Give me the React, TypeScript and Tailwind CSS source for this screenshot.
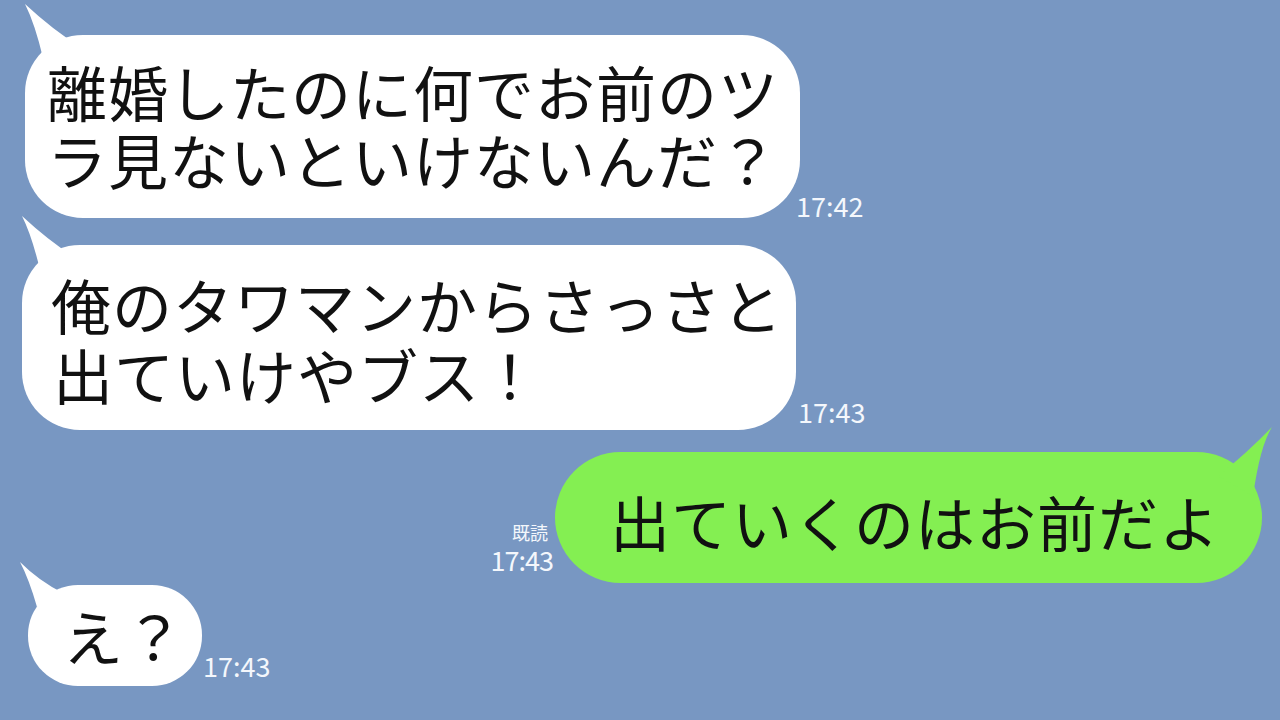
import React from "react";

const font = { fontFamily: '"Noto Sans CJK JP", "Noto Sans", sans-serif' };

function TailLeft({ top, left }: { top: string; left: string }) {
  return (
    <svg
      className={`absolute ${top} ${left} w-[70px] h-[80px]`}
      viewBox="0 0 70 80"
      fill="#ffffff"
    >
      <path d="M2,2 Q12,22 20,56 L56,44 Q30,28 2,2 Z" />
    </svg>
  );
}

export default function App() {
  return (
    <div
      className="w-full h-[720px] bg-[#7897c2] overflow-hidden flex flex-col text-[#111]"
      style={font}
    >
      {/* Row 1 */}
      <div className="flex items-end pl-[25px] pt-[35px]">
        <div className="relative w-[775px] h-[183px] bg-white rounded-[58px] flex flex-col justify-center pl-[22px] pb-[4px]">
          <TailLeft top="top-[-33px]" left="left-[-2px]" />
          <div className="relative text-[60px] leading-[68px] tracking-[1px] whitespace-nowrap">
            <div>離婚したのに何でお前のツ</div>
            <div>ラ見ないといけないんだ？</div>
          </div>
        </div>
        <div className="text-[27px] leading-[28px] text-[#f4f7fc] ml-[-4px] mb-[-2px]">17:42</div>
      </div>

      {/* Row 2 */}
      <div className="flex items-end pl-[22px] mt-[27px]">
        <div className="relative w-[774px] h-[185px] bg-white rounded-[58px] flex flex-col justify-center pl-[29px] pt-[2px]">
          <TailLeft top="top-[-31px]" left="left-[-2px]" />
          <div className="relative text-[60px] leading-[70px] tracking-[1px] whitespace-nowrap">
            <div>俺のタワマンからさっさと</div>
            <div className="pl-[2px]">出ていけやブス！</div>
          </div>
        </div>
        <div className="text-[27px] leading-[28px] text-[#f4f7fc] ml-[2px] mb-[4px]">17:43</div>
      </div>

      {/* Row 3 */}
      <div className="flex items-end justify-end pr-[18px] mt-[22px]">
        <div className="flex flex-col items-end text-[#f4f7fc] mr-[2px] mb-[8px]">
          <div className="text-[18px] leading-[26px] mr-[5px]">既読</div>
          <div className="text-[27px] leading-[30px] tracking-[-1px]">17:43</div>
        </div>
        <div className="relative w-[707px] h-[131px] bg-[#84ef52] rounded-[66px] flex items-center pl-[55px] pt-[6px]">
          <svg
            className="absolute top-[-28px] right-[-14px] w-[70px] h-[80px]"
            viewBox="0 0 70 80"
            fill="#84ef52"
          >
            <path d="M66,3 Q54,22 47,72 L12,52 Q40,30 66,3 Z" />
          </svg>
          <div className="relative text-[60px] leading-[70px] tracking-[1px] whitespace-nowrap">
            出ていくのはお前だよ
          </div>
        </div>
      </div>

      {/* Row 4 */}
      <div className="flex items-end pl-[28px] mt-[2px]">
        <div className="relative w-[174px] h-[101px] bg-white rounded-[50px] flex items-center pl-[35px]">
          <svg
            className="absolute top-[-24px] left-[-9px] w-[60px] h-[70px]"
            viewBox="0 0 60 70"
            fill="#ffffff"
          >
            <path d="M1,1 Q10,18 18,46 L44,32 Q20,20 1,1 Z" />
          </svg>
          <div className="relative text-[60px] leading-[70px] tracking-[1px] whitespace-nowrap pb-[2px]">
            え？
          </div>
        </div>
        <div className="text-[27px] leading-[28px] text-[#f4f7fc] ml-[1px] mb-[6px]">17:43</div>
      </div>
    </div>
  );
}
